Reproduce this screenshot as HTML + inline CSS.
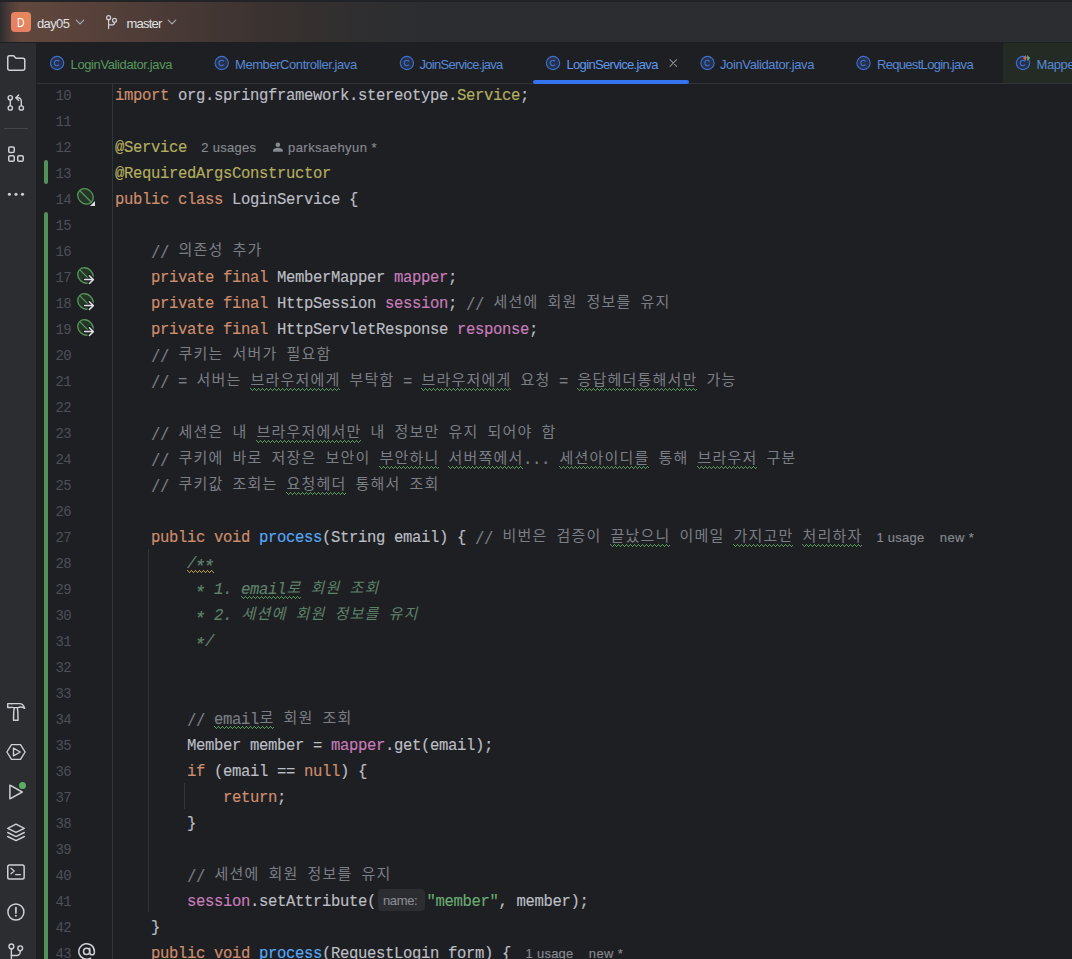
<!DOCTYPE html>
<html lang="ko">
<head>
<meta charset="utf-8">
<title>day05 – LoginService.java</title>
<style>
*{box-sizing:border-box;margin:0;padding:0}
html,body{width:1072px;height:959px;overflow:hidden;background:#1e1f22}
body{position:relative;font-family:"Liberation Sans",sans-serif;color:#bcbec4}
.abs{position:absolute}

/* ---------- title bar ---------- */
#titlebar{position:absolute;left:0;top:0;width:1072px;height:42px;
  background:linear-gradient(90deg,#2c2c2f 0,#3f3433 5px,#54403a 12px,#61473d 20px,#5f463d 40px,#543f39 110px,#463835 190px,#38312f 280px,#2f2e30 360px,#2b2d30 430px)}
#titlebar:before{content:"";position:absolute;left:0;top:0;width:100%;height:2px;background:#222326}
#projicon{position:absolute;left:11px;top:12px;width:20px;height:20px;border-radius:4px;
  background:linear-gradient(45deg,#e77d66,#e58a5a);color:#fff;font-size:13px;line-height:21px;text-align:center}
#projicon span{display:inline-block;transform:scaleX(.8)}
.tb{position:absolute;top:15px;height:18px;line-height:18px;font-size:13px;color:#dfe1e5;white-space:nowrap}

/* ---------- left tool strip ---------- */
#strip{position:absolute;left:0;top:43px;width:36px;height:916px;background:#2b2d30}
#strip .sep{position:absolute;left:4px;top:85px;width:24px;height:1px;background:#43454a}

/* ---------- tabs ---------- */
#tabs{position:absolute;left:37px;top:42px;width:1035px;height:42px;border-bottom:1px solid #313438}
.tab{position:absolute;top:13.5px;height:18px;line-height:18px;font-size:13px;white-space:nowrap}
.tab.g{color:#57995c}
.tab.b{color:#5689d8}
.tab.a{color:#5f98ee}
#lasttab{position:absolute;left:966px;top:1px;width:80px;height:40px;background:#232b24}
#underline{position:absolute;left:533px;top:80px;width:156px;height:4px;border-radius:2px;background:#3574f0}

/* ---------- editor ---------- */
#gutterline{position:absolute;left:112px;top:84px;width:1px;height:875px;background:#313438}
.ln{position:absolute;left:37px;width:34px;text-align:right;font-family:"Liberation Mono",monospace;font-size:14px;letter-spacing:-0.6px;line-height:26px;height:26px;color:#4b5059}
.cl{position:absolute;left:115px;height:26px;line-height:26px;font-family:"Liberation Mono",monospace;font-size:15.6px;letter-spacing:-0.36px;white-space:pre;color:#bcbec4;-webkit-text-stroke:0.15px}
.k{color:#cf8e6d}.an{color:#b3ae60}.c{color:#7a7e85}.f{color:#c77dbb}.m{color:#56a8f5}.s{color:#6aab73}
.d{color:#5f826b;font-style:italic}
.cl i{display:inline-block;vertical-align:top;width:15px;height:26px;line-height:26px;text-align:center;font-style:normal;font-family:"Liberation Mono","Noto Sans CJK KR",monospace;font-size:15px;letter-spacing:0;-webkit-text-stroke:0;position:relative}
.d i{font-style:italic}
.sl{display:inline-block;transform:translateY(0.8px) scaleY(1.2)}
.as{display:inline-block;transform:translate(-1px,3px) scale(1.18)}
.h{position:absolute;top:0;font-family:"Liberation Sans",sans-serif;font-size:13px;color:#868a91;white-space:nowrap}
.wv{display:inline-block;position:relative;vertical-align:top;height:26px}
.wv:after{content:"";position:absolute;left:0;right:0;top:19px;height:3px;
  background:
   linear-gradient(90deg,var(--w) 1px,transparent 1px) 0 0/4px 1px repeat-x,
   linear-gradient(90deg,transparent 1px,var(--w) 1px,var(--w) 2px,transparent 2px,transparent 3px,var(--w) 3px) 0 1px/4px 1px repeat-x,
   linear-gradient(90deg,transparent 2px,var(--w) 2px,var(--w) 3px,transparent 3px) 0 2px/4px 1px repeat-x}
.wv{--w:#569b5c}
.wv.wy{--w:#c29e4a}
.ph{display:inline-block;vertical-align:top;margin:0 1.5px 0 2px;width:47px;height:22px;line-height:24px;padding-left:5px;border-radius:4px;background:#2b2d30;color:#868a91;font-family:"Liberation Sans",sans-serif;font-size:13px}
.vcs{position:absolute;left:44px;width:4px;background:#549159;border-radius:2px}
.guide{position:absolute;width:1px;background:#313438}
</style>
</head>
<body>

<div id="titlebar">
  <div id="projicon"><span>D</span></div>
  <div class="tb" style="left:37px;letter-spacing:-0.64px">day05</div>
  <div class="tb" style="left:126.5px;letter-spacing:-0.79px">master</div>
  <svg class="abs" style="left:0;top:0" width="200" height="42" viewBox="0 0 200 42" fill="none" stroke-linecap="round" stroke-linejoin="round">
    <path d="M76.3 20.2 L80 23.9 L83.7 20.2" stroke="#a8abb2" stroke-width="1.2"/>
    <path d="M168.3 20.2 L172 23.9 L175.7 20.2" stroke="#a8abb2" stroke-width="1.2"/>
    <g stroke="#ced0d6" stroke-width="1.2">
      <circle cx="108.6" cy="17.7" r="2"/><circle cx="114.5" cy="20.3" r="2"/>
      <path d="M108.6 19.7 V28.6"/><path d="M114.5 22.3 V22.8 A2 2 0 0 1 112.5 24.8 H108.6"/>
    </g>
  </svg>
</div>

<div id="strip">
  <div class="sep"></div>
  <svg class="abs" style="left:0;top:0" width="36" height="916" viewBox="0 43 36 916" fill="none" stroke="#ced0d6" stroke-width="1.5" stroke-linecap="round" stroke-linejoin="round">
    <!-- project (folder) -->
    <path d="M7.75 57.5 a1.75 1.75 0 0 1 1.75 -1.75 h4.1 l2.4 2.5 h7 a1.75 1.75 0 0 1 1.75 1.75 v8.5 a1.75 1.75 0 0 1 -1.75 1.75 h-13.5 a1.75 1.75 0 0 1 -1.75 -1.75 z"/>
    <!-- pull requests -->
    <g stroke-width="1.4">
      <circle cx="10.3" cy="97.8" r="2.15"/><circle cx="10.3" cy="108" r="2.15"/><circle cx="21.3" cy="108" r="2.15"/>
      <path d="M10.3 100.1 V105.7"/><path d="M21.3 105.7 V101 a3.2 3.2 0 0 0 -3.2 -3.2 H16"/><path d="M18.7 95 L15.9 97.8 L18.7 100.6"/>
    </g>
    <!-- structure -->
    <rect x="8.75" y="147" width="5.5" height="5.5" rx="1.3"/><rect x="8.75" y="155.75" width="5.5" height="5.5" rx="1.3"/><rect x="17.7" y="155.75" width="5.5" height="5.5" rx="1.3"/>
    <!-- more -->
    <g fill="#ced0d6" stroke="none"><circle cx="9.4" cy="194.2" r="1.55"/><circle cx="16" cy="194.2" r="1.55"/><circle cx="22.5" cy="194.2" r="1.55"/></g>
    <!-- build (hammer) -->
    <g stroke-width="1.45">
      <path d="M7.75 703.6 H10.9 q0.7 0.45 1.4 0 H19.4 C22 703.6 23.9 705.5 24.6 708.3 C22.6 706.9 21 706.8 19.4 707.2 L17.9 707.6 H13.6 L12.3 707.4 q-0.7 -0.3 -1.3 0 H7.75 Z"/>
      <path d="M14.2 708.2 C13.6 712 13.55 716 13.55 720.25 H18.05 C18.05 716 18 712 17.4 708.2"/>
    </g>
    <!-- services -->
    <g stroke-width="1.4"><path d="M6.9 752 L11.5 744.6 H20.5 L25.1 752 L20.5 759.4 H11.5 Z"/><path d="M13.5 748.2 V755.8 L20.2 752 Z"/></g>
    <!-- run -->
    <path d="M9.9 785.2 V798.8 L22.3 792 Z"/>
    <circle cx="22.5" cy="785.5" r="4.2" fill="#5fad65" stroke="#2b2d30" stroke-width="1.4"/>
    <!-- layers -->
    <g stroke-width="1.4"><path d="M16 824.2 L24.3 828.3 L16 832.4 L7.7 828.3 Z"/><path d="M7.7 832.5 L16 836.6 L24.3 832.5"/><path d="M7.7 836.5 L16 840.6 L24.3 836.5"/></g>
    <!-- terminal -->
    <rect x="7.75" y="864.9" width="16.4" height="14.2" rx="1.75"/>
    <g stroke-width="1.3"><path d="M11 868.3 L14.2 871 L11 873.7"/><path d="M15.6 874.6 H20.4"/></g>
    <!-- problems -->
    <circle cx="15.9" cy="912" r="8"/><path d="M15.9 907.5 V912.9" stroke-width="1.7"/><circle cx="15.9" cy="915.8" r="1" fill="#ced0d6" stroke="none"/>
    <!-- git -->
    <g stroke-width="1.4"><circle cx="11.4" cy="946.4" r="2.4"/><circle cx="20.2" cy="948.3" r="2.4"/><path d="M11.4 948.8 V962"/><path d="M20.2 950.7 V952 a3.5 3.5 0 0 1 -3.5 3.5 H11.4"/></g>
  </svg>
</div>

<div id="tabs">
  <div id="lasttab"></div>
  <div class="tab g" style="left:33.6px;letter-spacing:-0.39px">LoginValidator.java</div>
  <div class="tab b" style="left:198.0px;letter-spacing:-0.43px">MemberController.java</div>
  <div class="tab b" style="left:382.6px;letter-spacing:-0.73px">JoinService.java</div>
  <div class="tab a" style="left:529.5px;letter-spacing:-0.67px">LoginService.java</div>
  <div class="tab b" style="left:683.0px;letter-spacing:-0.38px">JoinValidator.java</div>
  <div class="tab b" style="left:840.0px;letter-spacing:-0.69px">RequestLogin.java</div>
  <div class="tab b" style="left:999.5px;letter-spacing:-0.4px">Mapper</div>
</div>
<svg class="abs" style="left:37px;top:43px" width="1035" height="40" viewBox="37 43 1035 40" fill="none">
  <defs><g id="cico"><circle r="6.65" fill="#25324d" stroke="#4070cc" stroke-width="1.1"/><path d="M2.07 -1.74 A2.7 2.7 0 1 0 2.07 1.74" stroke="#4070cc" stroke-width="1.15"/></g></defs>
  <use href="#cico" x="57.1" y="63"/>
  <use href="#cico" x="221.7" y="63"/>
  <use href="#cico" x="406.9" y="63"/>
  <use href="#cico" x="553" y="63"/>
  <use href="#cico" x="707.5" y="63"/>
  <use href="#cico" x="863.5" y="63"/>
  <use href="#cico" x="1023" y="63"/><path d="M1022.8 58 L1026 55 V61 Z" fill="#db5c5c"/><path d="M1027 55 L1030.4 58 L1027 61 Z" fill="#5fad65"/>
  <path d="M670 59.7 L676.6 66.3 M676.6 59.7 L670 66.3" stroke="#868a91" stroke-width="1.1" stroke-linecap="round"/>
</svg>
<div id="underline"></div>

<div id="gutterline"></div>
<div id="gutter">
<div class="ln" style="top:83px">10</div>
<div class="ln" style="top:109px">11</div>
<div class="ln" style="top:135px">12</div>
<div class="ln" style="top:161px">13</div>
<div class="ln" style="top:187px">14</div>
<div class="ln" style="top:213px">15</div>
<div class="ln" style="top:239px">16</div>
<div class="ln" style="top:265px">17</div>
<div class="ln" style="top:291px">18</div>
<div class="ln" style="top:317px">19</div>
<div class="ln" style="top:343px">20</div>
<div class="ln" style="top:369px">21</div>
<div class="ln" style="top:395px">22</div>
<div class="ln" style="top:421px">23</div>
<div class="ln" style="top:447px">24</div>
<div class="ln" style="top:473px">25</div>
<div class="ln" style="top:499px">26</div>
<div class="ln" style="top:525px">27</div>
<div class="ln" style="top:551px">28</div>
<div class="ln" style="top:577px">29</div>
<div class="ln" style="top:603px">30</div>
<div class="ln" style="top:629px">31</div>
<div class="ln" style="top:655px">32</div>
<div class="ln" style="top:681px">33</div>
<div class="ln" style="top:707px">34</div>
<div class="ln" style="top:733px">35</div>
<div class="ln" style="top:759px">36</div>
<div class="ln" style="top:785px">37</div>
<div class="ln" style="top:811px">38</div>
<div class="ln" style="top:837px">39</div>
<div class="ln" style="top:863px">40</div>
<div class="ln" style="top:889px">41</div>
<div class="ln" style="top:915px">42</div>
<div class="ln" style="top:941px">43</div>
<div class="vcs" style="top:160px;height:24px"></div>
<div class="vcs" style="top:212px;height:750px"></div>
</div>
<div class="guide" style="left:148px;top:549px;height:363px"></div>
<div class="guide" style="left:184px;top:783px;height:26px"></div>
<svg class="abs" style="left:72px;top:84px" width="40" height="875" viewBox="72 84 40 875" fill="none">
  <defs>
    <g id="bean"><g transform="rotate(45)"><ellipse rx="8.35" ry="7.15" fill="#253627" stroke="#57965c" stroke-width="1.3"/><path d="M-8.3 0 H8.3" stroke="#57965c" stroke-width="1.3"/></g></g>
    <g id="arrow" stroke-linecap="round" stroke-linejoin="round">
      <g stroke="#1e1f22" stroke-width="3.8"><path d="M-0.9 4.1 H7.4"/><path d="M3.9 0.2 L7.8 4.1 L3.9 8"/></g>
      <g stroke="#dfe1e5" stroke-width="1.5"><path d="M-0.9 4.1 H7.4"/><path d="M3.9 0.2 L7.8 4.1 L3.9 8"/></g>
    </g>
  </defs>
  <use href="#bean" x="85.5" y="196.4"/><path d="M95 201 V206 H90 Z" fill="#dfe1e5"/>
  <use href="#bean" x="85.5" y="275.5"/><use href="#arrow" x="85.5" y="275.5"/>
  <use href="#bean" x="85.5" y="301.5"/><use href="#arrow" x="85.5" y="301.5"/>
  <use href="#bean" x="85.5" y="327.5"/><use href="#arrow" x="85.5" y="327.5"/>
  <g stroke="#ced0d6" stroke-width="1.5" stroke-linecap="round"><circle cx="86.6" cy="951.4" r="3.1"/><path d="M89.7 948.3 V952.5 A2.3 2.3 0 0 0 94.4 952.5 V951.4 A7.8 7.8 0 1 0 90.5 958.2"/></g>
</svg>
<div id="code">
<div class="cl" style="top:83px"><span class="k">import</span> org.springframework.stereotype.<span class="an">Service</span>;</div>
<div class="cl" style="top:135px"><span class="an">@Service</span><span class="h" style="left:86.3px;letter-spacing:0.28px">2 usages</span><svg class="abs" style="left:156px;top:6px" width="14" height="14" viewBox="271 141 14 14"><circle cx="277.9" cy="144.8" r="2.3" fill="#868a91"/><path d="M273 151.8 V150.6 C273 148.6 275.4 147.8 277.9 147.8 S282.8 148.6 282.8 150.6 V151.8 Z" fill="#868a91"/></svg><span class="h" style="left:173px;letter-spacing:0.45px">parksaehyun *</span></div>
<div class="cl" style="top:161px"><span class="an">@RequiredArgsConstructor</span></div>
<div class="cl" style="top:187px"><span class="k">public class</span> LoginService {</div>
<div class="cl" style="top:239px">    <span class="c"><span class="sl">//</span> <i>의</i><i>존</i><i>성</i> <i>추</i><i>가</i></span></div>
<div class="cl" style="top:265px">    <span class="k">private final</span> MemberMapper <span class="f">mapper</span>;</div>
<div class="cl" style="top:291px">    <span class="k">private final</span> HttpSession <span class="f">session</span>; <span class="c"><span class="sl">//</span> <i>세</i><i>션</i><i>에</i> <i>회</i><i>원</i> <i>정</i><i>보</i><i>를</i> <i>유</i><i>지</i></span></div>
<div class="cl" style="top:317px">    <span class="k">private final</span> HttpServletResponse <span class="f">response</span>;</div>
<div class="cl" style="top:343px">    <span class="c"><span class="sl">//</span> <i>쿠</i><i>키</i><i>는</i> <i>서</i><i>버</i><i>가</i> <i>필</i><i>요</i><i>함</i></span></div>
<div class="cl" style="top:369px">    <span class="c"><span class="sl">//</span> = <i>서</i><i>버</i><i>는</i> <span class="wv"><i>브</i><i>라</i><i>우</i><i>저</i><i>에</i><i>게</i></span> <i>부</i><i>탁</i><i>함</i> = <span class="wv"><i>브</i><i>라</i><i>우</i><i>저</i><i>에</i><i>게</i></span> <i>요</i><i>청</i> = <span class="wv"><i>응</i><i>답</i><i>헤</i><i>더</i><i>통</i><i>해</i><i>서</i><i>만</i></span> <i>가</i><i>능</i></span></div>
<div class="cl" style="top:421px">    <span class="c"><span class="sl">//</span> <i>세</i><i>션</i><i>은</i> <i>내</i> <span class="wv"><i>브</i><i>라</i><i>우</i><i>저</i><i>에</i><i>서</i><i>만</i></span> <i>내</i> <i>정</i><i>보</i><i>만</i> <i>유</i><i>지</i> <i>되</i><i>어</i><i>야</i> <i>함</i></span></div>
<div class="cl" style="top:447px">    <span class="c"><span class="sl">//</span> <i>쿠</i><i>키</i><i>에</i> <i>바</i><i>로</i> <i>저</i><i>장</i><i>은</i> <i>보</i><i>안</i><i>이</i> <span class="wv"><i>부</i><i>안</i><i>하</i><i>니</i></span> <span class="wv"><i>서</i><i>버</i><i>쪽</i><i>에</i><i>서</i></span>... <span class="wv"><i>세</i><i>션</i><i>아</i><i>이</i><i>디</i><i>를</i></span> <i>통</i><i>해</i> <span class="wv"><i>브</i><i>라</i><i>우</i><i>저</i></span> <i>구</i><i>분</i></span></div>
<div class="cl" style="top:473px">    <span class="c"><span class="sl">//</span> <i>쿠</i><i>키</i><i>값</i> <i>조</i><i>회</i><i>는</i> <span class="wv"><i>요</i><i>청</i><i>헤</i><i>더</i></span> <i>통</i><i>해</i><i>서</i> <i>조</i><i>회</i></span></div>
<div class="cl" style="top:525px">    <span class="k">public void</span> <span class="m">process</span>(String email) { <span class="c"><span class="sl">//</span> <i>비</i><i>번</i><i>은</i> <i>검</i><i>증</i><i>이</i> <span class="wv"><i>끝</i><i>났</i><i>으</i><i>니</i></span> <i>이</i><i>메</i><i>일</i> <span class="wv"><i>가</i><i>지</i><i>고</i><i>만</i></span> <span class="wv"><i>처</i><i>리</i><i>하</i><i>자</i></span></span><span class="h" style="left:761.5px;letter-spacing:0.24px">1 usage</span><span class="h" style="left:824.8px;letter-spacing:0.38px">new *</span></div>
<div class="cl" style="top:551px">        <span class="d"><span class="wv wy">/<span class="as">*</span><span class="as">*</span></span></span></div>
<div class="cl" style="top:577px">         <span class="d"><span class="as">*</span> 1. <span class="wv">email<i>로</i></span> <i>회</i><i>원</i> <i>조</i><i>회</i></span></div>
<div class="cl" style="top:603px">         <span class="d"><span class="as">*</span> 2. <i>세</i><i>션</i><i>에</i> <i>회</i><i>원</i> <i>정</i><i>보</i><i>를</i> <i>유</i><i>지</i></span></div>
<div class="cl" style="top:629px">         <span class="d"><span class="as">*</span>/</span></div>
<div class="cl" style="top:707px">        <span class="c"><span class="sl">//</span> <span class="wv">email<i>로</i></span> <i>회</i><i>원</i> <i>조</i><i>회</i></span></div>
<div class="cl" style="top:733px">        Member member = <span class="f">mapper</span>.get(email);</div>
<div class="cl" style="top:759px">        <span class="k">if</span> (email == <span class="k">null</span>) {</div>
<div class="cl" style="top:785px">            <span class="k">return</span>;</div>
<div class="cl" style="top:811px">        }</div>
<div class="cl" style="top:863px">        <span class="c"><span class="sl">//</span> <i>세</i><i>션</i><i>에</i> <i>회</i><i>원</i> <i>정</i><i>보</i><i>를</i> <i>유</i><i>지</i></span></div>
<div class="cl" style="top:889px">        <span class="f">session</span>.setAttribute(<span class="ph">name:</span><span class="s">"member"</span>, member);</div>
<div class="cl" style="top:915px">    }</div>
<div class="cl" style="top:941px">    <span class="k">public void</span> <span class="m">process</span>(RequestLogin form) {<span class="h" style="left:410.6px;letter-spacing:0.24px">1 usage</span><span class="h" style="left:473.8px;letter-spacing:0.38px">new *</span></div>
</div>

</body>
</html>
